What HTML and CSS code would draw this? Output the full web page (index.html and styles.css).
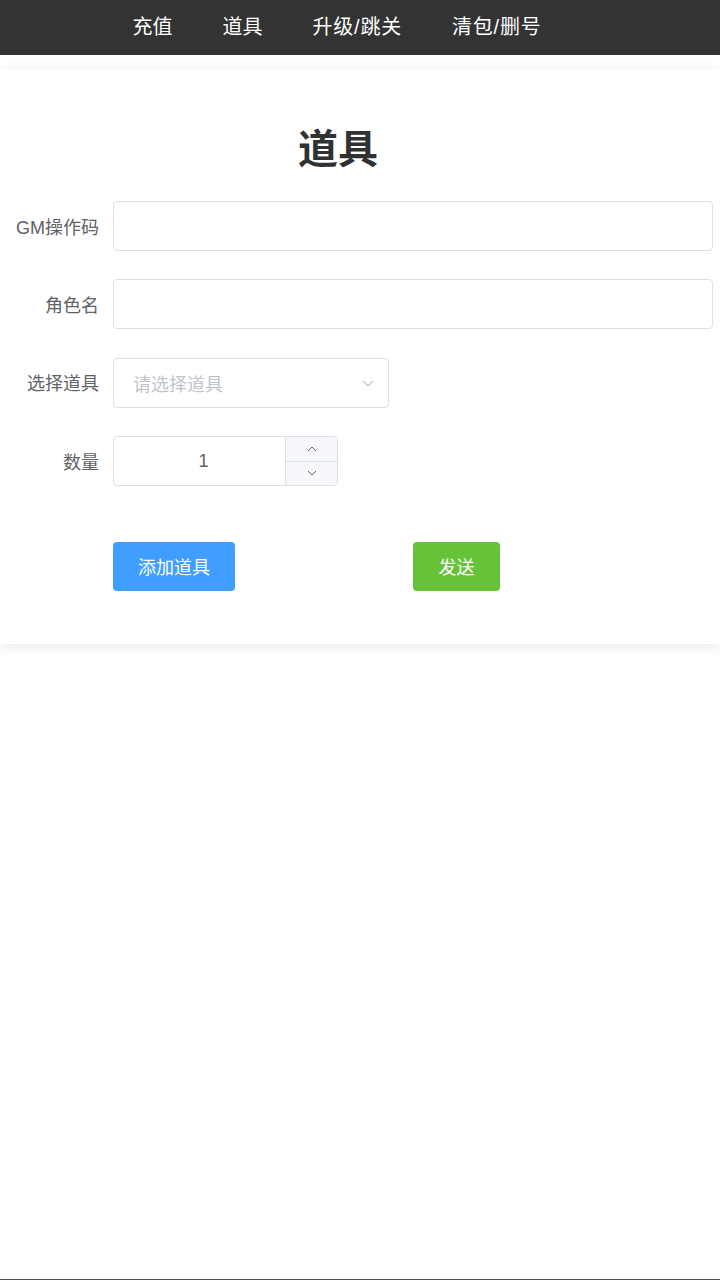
FILE: index.html
```html
<!DOCTYPE html>
<html lang="zh-CN">
<head>
<meta charset="utf-8">
<title>道具</title>
<link rel="stylesheet" href="styles.css">
</head>
<body>
<nav class="nav">
  <div class="nav-inner">
    <a class="nav-item">充值</a>
    <a class="nav-item">道具</a>
    <a class="nav-item">升级/跳关</a>
    <a class="nav-item">清包/删号</a>
  </div>
</nav>
<main class="card">
  <h2 class="title">道具</h2>
  <form class="form">
    <div class="form-item">
      <label class="label">GM操作码</label>
      <div class="control"><input class="input" type="text"></div>
    </div>
    <div class="form-item">
      <label class="label">角色名</label>
      <div class="control"><input class="input" type="text"></div>
    </div>
    <div class="form-item">
      <label class="label">选择道具</label>
      <div class="control">
        <div class="select">
          <span class="placeholder">请选择道具</span>
          <svg class="select-arrow" width="14" height="14" viewBox="0 0 14 14"><path d="M2 5 L7 10 L12 5" fill="none" stroke="#c0c4cc" stroke-width="1.1"/></svg>
        </div>
      </div>
    </div>
    <div class="form-item">
      <label class="label">数量</label>
      <div class="control">
        <div class="number">
          <span class="number-value">1</span>
          <div class="spin">
            <span class="spin-btn spin-up"><svg width="12" height="8" viewBox="0 0 12 8"><path d="M2 6 L6 2 L10 6" fill="none" stroke="#606266" stroke-width="1"/></svg></span>
            <span class="spin-btn"><svg width="12" height="8" viewBox="0 0 12 8"><path d="M2 2 L6 6 L10 2" fill="none" stroke="#606266" stroke-width="1"/></svg></span>
          </div>
        </div>
      </div>
    </div>
    <div class="actions">
      <button type="button" class="btn btn-primary">添加道具</button>
      <button type="button" class="btn btn-success">发送</button>
    </div>
  </form>
</main>
</body>
</html>
```

FILE: styles.css
```css
* { box-sizing: border-box; }
html, body { margin: 0; padding: 0; }
body {
  min-height: 1280px;
  background: #fff;
  border-bottom: 1px solid #47525a;
  font-family: "Liberation Sans", "Noto Sans CJK SC", sans-serif;
  color: #606266;
}
.nav {
  background: #333333;
  height: 55px;
}
.nav-inner {
  width: 674px;
  height: 55px;
  display: flex;
  justify-content: center;
  align-items: center;
}
.nav-item {
  color: #fff;
  font-size: 20px;
  padding: 0 25px;
  line-height: 55px;
}
.nav-item:nth-child(n+3) { letter-spacing: 0.8px; }
.card {
  margin-top: 14px;
  background: #fff;
  box-shadow: 0 2px 12px 0 rgba(0, 0, 0, 0.1);
  padding: 50px 7px 53px 0;
}
.title {
  margin: 0 0 22px;
  padding-right: 37px;
  text-align: center;
  font-size: 40px;
  line-height: 60px;
  font-weight: bold;
  color: #303133;
}
.form-item {
  display: flex;
  align-items: center;
  height: 50px;
  margin-bottom: 28.4px;
}
.label {
  width: 113px;
  flex: none;
  padding-right: 14px;
  padding-bottom: 1px;
  text-align: right;
  font-size: 18px;
  color: #606266;
}
.control { flex: 1; display: flex; }
.input {
  width: 100%;
  height: 50px;
  border: 1px solid #dcdfe6;
  border-radius: 4px;
  padding: 0 20px;
  font-size: 18px;
  outline: none;
}
.select {
  width: 276px;
  height: 50px;
  border: 1px solid #dcdfe6;
  border-radius: 4px;
  display: flex;
  align-items: center;
  justify-content: space-between;
  padding: 0 13px 0 19px;
}
.placeholder { color: #c0c4cc; font-size: 18px; }
.number {
  width: 225px;
  height: 50px;
  border: 1px solid #dcdfe6;
  border-radius: 4px;
  display: flex;
  overflow: hidden;
}
.number-value {
  flex: 1;
  text-align: center;
  padding-left: 8px;
  line-height: 48px;
  font-size: 18px;
  color: #606266;
}
.spin {
  width: 52px;
  display: flex;
  flex-direction: column;
  border-left: 1px solid #dcdfe6;
  background: #f5f7fa;
}
.spin-btn {
  flex: 1;
  display: flex;
  align-items: center;
  justify-content: center;
}
.spin-up { border-bottom: 1px solid #dcdfe6; }
.actions {
  display: flex;
  padding-left: 113px;
  padding-top: 27.4px;
}
.btn {
  height: 49px;
  border: none;
  border-radius: 4px;
  color: #fff;
  font-size: 18px;
  font-family: inherit;
  padding: 0 25px;
}
.btn-primary { background: #409eff; width: 122px; }
.btn-success { background: #67c23a; width: 87px; margin-left: 178px; }
```
